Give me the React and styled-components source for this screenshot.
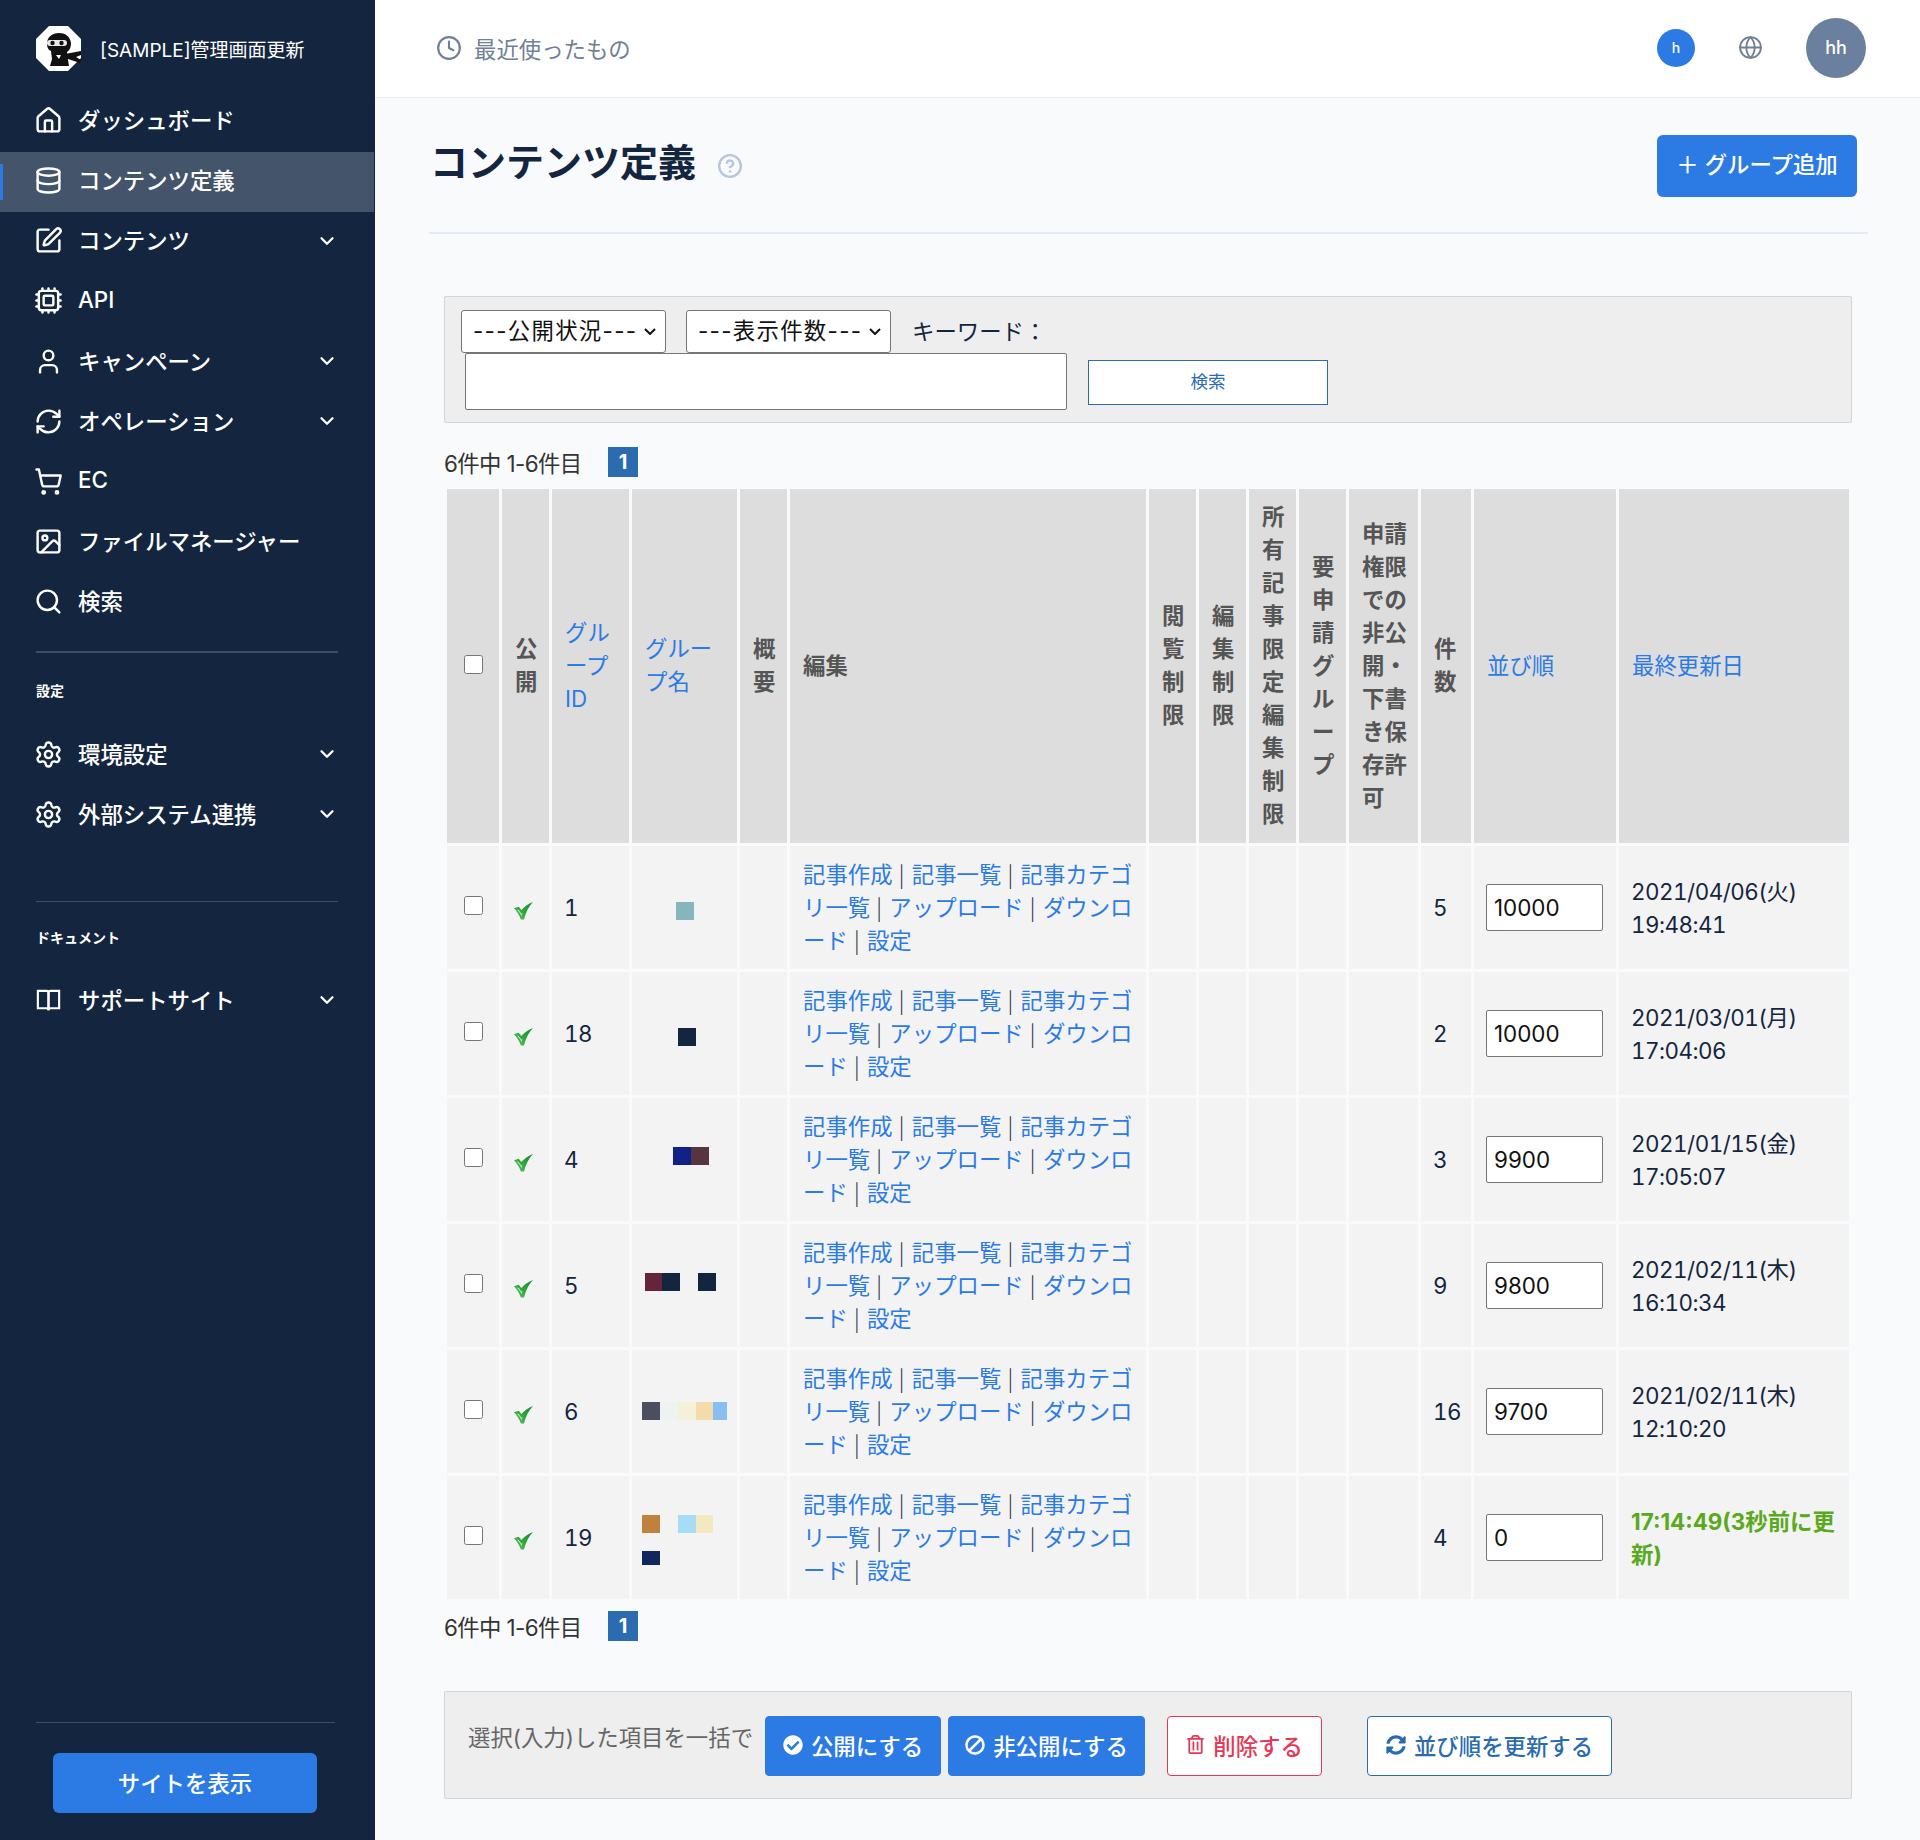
import styled, { createGlobalStyle } from 'styled-components';
import {
  House,
  Database,
  SquarePen,
  Cpu,
  User,
  RefreshCw,
  ShoppingCart,
  Image,
  Search,
  Settings,
  ChevronDown,
  Clock,
  Globe,
  CircleHelp,
} from 'lucide-react';
import { FaCheckCircle, FaBan, FaRegTrashAlt, FaSyncAlt } from 'react-icons/fa';

const GlobalStyle = createGlobalStyle`
  * {
    box-sizing: border-box;
  }
  html,
  body {
    margin: 0;
    padding: 0;
    background: #f9fafc;
  }
  body {
    font-family: Inter, 'Noto Sans CJK JP', sans-serif;
    font-size: 22.4px;
    color: #14263f;
  }
`;

const Shell = styled.div`
  display: flex;
  width: 1920px;
  height: 1840px;
  overflow: hidden;
`;

const Sidebar = styled.aside`
  flex: 0 0 375px;
  display: flex;
  flex-direction: column;
  background: #14263f;
  color: #fff;
`;

const Brand = styled.div`
  display: flex;
  align-items: center;
  gap: 19px;
  height: 92px;
  padding: 5px 0 0 36px;
  font-size: 19px;
`;

const NavGroup = styled.nav`
  display: flex;
  flex-direction: column;
`;

const NavItem = styled.a`
  position: relative;
  display: flex;
  align-items: center;
  gap: 15px;
  height: 60.2px;
  margin-right: 1px;
  padding: 0 36px 6.5px 34px;
  background: ${({ $active }) => ($active ? '#44546a' : 'transparent')};
  font-size: 22.4px;
  font-weight: 500;

  &::before {
    content: '';
    display: ${({ $active }) => ($active ? 'block' : 'none')};
    position: absolute;
    left: 0;
    top: 12px;
    width: 3px;
    height: 36px;
    background: #2c7be5;
  }

  & > svg {
    flex: none;
    margin-top: 3px;
  }
`;

const NavLabel = styled.span`
  flex: 1;
`;

const SideRule = styled.hr`
  flex: none;
  width: ${({ $w }) => $w || 302}px;
  height: ${({ $thin }) => ($thin ? 1 : 2)}px;
  margin: ${({ $top }) => $top}px 0 0 36px;
  border: 0;
  background: #3d4e66;
`;

const SideHeading = styled.div`
  margin: ${({ $top }) => $top}px 0 ${({ $bottom }) => $bottom}px 36px;
  font-size: 14px;
  line-height: 20px;
  font-weight: 700;
`;

const SideFooter = styled.div`
  margin-top: auto;
  padding-bottom: 27px;
`;

const SiteButton = styled.a`
  display: flex;
  align-items: center;
  justify-content: center;
  width: 264px;
  height: 60px;
  margin: 30px 0 0 53px;
  padding-bottom: 2px;
  border-radius: 6px;
  background: #2c7be5;
  font-size: 22.4px;
  font-weight: 500;
`;

const Main = styled.main`
  flex: 1;
  display: flex;
  flex-direction: column;
  min-width: 0;
`;

const TopBar = styled.header`
  display: flex;
  align-items: center;
  height: 98px;
  padding: 0 54px 2px 61px;
  background: #fff;
  border-bottom: 1px solid #e9ecf0;
`;

const Recent = styled.div`
  flex: 1;
  display: flex;
  align-items: center;
  gap: 12px;
  color: #718096;
  font-size: 22.4px;
`;

const Bubble = styled.div`
  display: flex;
  align-items: center;
  justify-content: center;
  width: ${({ $size }) => $size}px;
  height: ${({ $size }) => $size}px;
  border-radius: 50%;
  background: ${({ $bg }) => $bg};
  color: #fff;
  font-size: ${({ $font }) => $font}px;
  font-weight: 500;
`;

const TopIcons = styled.div`
  display: flex;
  align-items: center;
`;

const GlobeLink = styled.span`
  display: flex;
  margin: 0 43px 0 43px;
  color: #718096;
`;

const Content = styled.div`
  padding: 0 52px 0 54px;
`;

const PageHead = styled.div`
  display: flex;
  align-items: center;
  justify-content: space-between;
  height: 136px;
  padding: 1px 11px 0 1px;
  border-bottom: 2px solid #e3ebf6;
`;

const TitleWrap = styled.div`
  display: flex;
  align-items: center;
  gap: 21px;
`;

const Title = styled.h1`
  margin: 0 0 5px;
  font-size: 38px;
  line-height: 1.2;
  font-weight: 700;
  color: #14263f;
`;

const HelpMark = styled.span`
  display: flex;
  color: #b7c6dc;
  margin-top: 1px;
`;

const AddButton = styled.a`
  display: flex;
  align-items: center;
  justify-content: center;
  gap: 7px;
  width: 200px;
  height: 62px;
  padding-bottom: 6px;
  border-radius: 6px;
  background: #2c7be5;
  color: #fff;
  font-size: 22.4px;
  font-weight: 500;
`;

const Body = styled.div`
  padding: 0 16px 0 15px;
`;

const Panel = styled.div`
  background: #eee;
  border: 1px solid #d5d5d5;
  border-radius: 2px;
`;

const FilterPanel = styled(Panel)`
  height: 127px;
  margin-top: 62px;
  padding: 13px 16px 0;
`;

const FilterRow = styled.div`
  display: flex;
  align-items: center;
  gap: 21px;
  height: 43px;
`;

const Select = styled.select`
  appearance: none;
  width: 205px;
  height: 43px;
  margin-right: ${({ $tight }) => ($tight ? -1 : 0)}px;
  padding: 0 4px 2px 11px;
  background: #fff
    url("data:image/svg+xml,%3Csvg xmlns='http://www.w3.org/2000/svg' width='12' height='7' fill='none' stroke='%23111' stroke-width='2'%3E%3Cpath d='M1 1l5 5 5-5'/%3E%3C/svg%3E")
    no-repeat right 9px center;
  border: 1px solid #767676;
  border-radius: 3px;
  color: #111;
  font: inherit;
  font-size: 22.4px;
  letter-spacing: 1.3px;
`;

const KeywordLabel = styled.label`
  margin-bottom: 4px;
`;

const SearchRow = styled.div`
  display: flex;
  align-items: center;
  gap: 21px;
  padding-left: 4px;
`;

const SearchInput = styled.input`
  width: 602px;
  height: 57px;
  background: #fff;
  border: 1px solid #767676;
  border-radius: 2px;
`;

const SearchButton = styled.button`
  width: 240px;
  height: 45px;
  margin-top: 1px;
  padding: 0 0 3px;
  background: #fff;
  border: 1px solid #2b6cb0;
  border-radius: 0;
  color: #2b6cb0;
  font: inherit;
  font-size: 17.5px;
`;

const Pager = styled.div`
  display: flex;
  align-items: center;
  gap: 26px;
  height: 30px;
  margin-top: ${({ $top }) => $top}px;
  color: #333;
  letter-spacing: -0.6px;
`;

const PageNo = styled.span`
  display: flex;
  align-items: center;
  justify-content: center;
  width: 30px;
  height: 30px;
  background: #2b6cb0;
  color: #fff;
  font-size: 20px;
  font-weight: 700;
`;

const Table = styled.table`
  width: 1408px;
  margin-top: 9px;
  table-layout: fixed;
  border-collapse: separate;
  border-spacing: 3px;
  line-height: 33px;
`;

const HeadCell = styled.th`
  width: ${({ $w }) => $w}px;
  height: 354px;
  padding: 0 11px 2px 13px;
  background: #ddd;
  color: #555;
  font-size: 22.4px;
  font-weight: 700;
  text-align: left;
  vertical-align: middle;

  a {
    color: #2c7be5;
    font-weight: 400;
  }
`;

const RowCheck = styled.input`
  display: block;
  width: 19px;
  height: 19px;
  margin: ${({ $head }) => ($head ? '0 0 1px 4px' : '0 0 4px 5px')};
`;

const Cell = styled.td`
  height: 123px;
  padding: 12px 11px 12px 12px;
  background: #f3f3f3;
  color: #14263f;
  font-size: 22.4px;
  font-variant-numeric: tabular-nums;
  letter-spacing: -0.5px;
  vertical-align: middle;
`;

const TickCell = styled(Cell)`
  padding-left: 11px;

  svg {
    display: block;
    margin-top: 6px;
  }
`;

const EditCell = styled(Cell)`
  padding-left: 13px;
  letter-spacing: 0;
`;

const EditLink = styled.a`
  color: #2c7be5;
`;

const Sep = styled.span`
  font-family: 'Noto Sans CJK JP', sans-serif;
  font-weight: 300;
  line-height: 0;
  letter-spacing: 1.2px;
`;

const SwatchCell = styled.td`
  height: 123px;
  padding: ${({ $top }) => $top}px 10px 0 ${({ $left }) => $left}px;
  background: #f3f3f3;
  vertical-align: top;
`;

const SwatchWrap = styled.div`
  display: flex;
  flex-wrap: wrap;
  width: 100%;
`;

const Swatch = styled.span`
  flex: none;
  width: ${({ $w }) => $w || 18}px;
  height: ${({ $h }) => $h || 18}px;
  background: ${({ $c }) => $c};
`;

const LineBreak = styled.span`
  flex: 0 0 100%;
  height: 18px;
`;

const SortInput = styled.input`
  display: block;
  width: 117px;
  height: 47px;
  padding: 0 7px;
  background: #fff;
  border: 1px solid #767676;
  border-radius: 2px;
  color: #111;
  font: inherit;
  font-size: 22.4px;
  font-variant-numeric: normal;
  letter-spacing: 0;
`;

const SortCell = styled(Cell)`
  padding: 0 0 0 12px;
`;

const Fresh = styled.strong`
  color: #5aa91e;
  font-variant-numeric: normal;
  letter-spacing: 0;
`;

const BulkPanel = styled(Panel)`
  display: flex;
  align-items: flex-start;
  height: 108px;
  margin-top: 50px;
  padding: 24px 0 0 23px;
`;

const BulkLabel = styled.span`
  margin: 5px 12px 0 0;
  color: #666;
  line-height: 33px;
  white-space: nowrap;
`;

const ActionButton = styled.a`
  display: flex;
  align-items: center;
  justify-content: center;
  gap: 8px;
  width: ${({ $w }) => $w}px;
  height: 60px;
  margin-left: ${({ $gap }) => $gap}px;
  padding-bottom: 3px;
  border: 1px solid ${({ $line }) => $line};
  border-radius: 4px;
  background: ${({ $bg }) => $bg};
  color: ${({ $fg }) => $fg};
  font-size: 22.4px;
  font-weight: 500;
  white-space: nowrap;
`;

const SlashIcon = styled(FaBan)`
  transform: scaleX(-1);
`;

const BookIcon = () => (
  <svg width="29" height="29" viewBox="0 0 30 30" fill="none" stroke="#fff" strokeWidth="2.200">
    <path d="M4 5h9c1.200 0 2 .8 2 2v18c0-1.200-.8-2-2-2H4V5z" />
    <path d="M26 5h-9c-1.200 0-2 .8-2 2v18c0-1.200.8-2 2-2h9V5z" />
  </svg>
);

const NinjaLogo = () => (
  <svg width="45" height="45" viewBox="0 0 45 45">
    <polygon points="13,0 32,0 45,13 45,32 32,45 13,45 0,32 0,13" fill="#fff" />
    <path
      d="M11 18c0-7 5-11 12-11 6 0 11 3 12 10 0 4-1 7-4 9l1 8 1 6H14l2-7-1-8c-3-1-4-4-4-7z"
      fill="#111"
    />
    <path d="M29 28l16-3v4l-5 2 5 3-1 3-15-5z" fill="#111" />
    <path d="M14 14h14c2 0 3 1 3 3s-1 3-3 3H14c-2 0-3-1-3-3s1-3 3-3z" fill="#e8e8e8" />
    <circle cx="16.500" cy="17" r="2.200" fill="#111" />
    <circle cx="25.500" cy="17" r="2.200" fill="#111" />
    <path d="M20 29h5l-2 4z" fill="#fff" />
    <path d="M15 40h3v5h-3zM21 40h3v5h-3zM27 40h3v5h-3z" fill="#fff" />
  </svg>
);

const GreenCheck = () => (
  <svg width="21" height="18" viewBox="0 0 18 17">
    <defs>
      <linearGradient id="tick" x1="0" y1="1" x2="1" y2="0">
        <stop offset="0" stopColor="#6cc06c" />
        <stop offset="0.5" stopColor="#2ba63a" />
        <stop offset="1" stopColor="#0f8a27" />
      </linearGradient>
    </defs>
    <path d="M0 6l4.500-1.500 2.500 3C9 5 13 2 18 0c-4 4-7 10-8.500 16.500H6.500C5 12.500 3 9 0 6z" fill="url(#tick)" />
    <path d="M2.500 7l2 .5 2.500 3.500 1-1-.8 3.500C6.500 11 4.500 9 2.500 7z" fill="#c8ecc8" />
  </svg>
);

const mainNav = [
  { icon: House, label: 'ダッシュボード' },
  { icon: Database, label: 'コンテンツ定義', active: true },
  { icon: SquarePen, label: 'コンテンツ', more: true },
  { icon: Cpu, label: 'API' },
  { icon: User, label: 'キャンペーン', more: true },
  { icon: RefreshCw, label: 'オペレーション', more: true },
  { icon: ShoppingCart, label: 'EC' },
  { icon: Image, label: 'ファイルマネージャー' },
  { icon: Search, label: '検索' },
];

const columns = [
  { w: 52 },
  { w: 47, label: '公開' },
  { w: 77, label: 'グループID', link: true },
  { w: 105, label: 'グループ名', link: true },
  { w: 47, label: '概要' },
  { w: 356, label: '編集' },
  { w: 47, label: '閲覧制限' },
  { w: 47, label: '編集制限' },
  { w: 47, label: '所有記事限定編集制限' },
  { w: 47, label: '要申請グループ' },
  { w: 69, label: '申請権限での非公開・下書き保存許可' },
  { w: 50, label: '件数' },
  { w: 142, label: '並び順', link: true },
  { w: 230, label: '最終更新日', link: true },
];

const rows = [
  {
    id: 1,
    count: 5,
    order: 10000,
    date: ['2021/04/06(火)', '19:48:41'],
    top: 56,
    left: 44,
    swatches: [{ c: '#86b5bb' }],
  },
  {
    id: 18,
    count: 2,
    order: 10000,
    date: ['2021/03/01(月)', '17:04:06'],
    top: 56,
    left: 46,
    swatches: [{ c: '#14263f' }],
  },
  {
    id: 4,
    count: 3,
    order: 9900,
    date: ['2021/01/15(金)', '17:05:07'],
    top: 49,
    left: 41,
    swatches: [{ c: '#10218a' }, { c: '#573540' }],
  },
  {
    id: 5,
    count: 9,
    order: 9800,
    date: ['2021/02/11(木)', '16:10:34'],
    top: 49,
    left: 13,
    swatches: [{ c: '#66233c', w: 17 }, { c: '#14263f' }, { c: 'transparent' }, { c: '#14263f' }],
  },
  {
    id: 6,
    count: 16,
    order: 9700,
    date: ['2021/02/11(木)', '12:10:20'],
    top: 52,
    left: 10,
    swatches: [
      { c: '#4b4e5f' },
      { c: '#edf3f0' },
      { c: '#f3f1d9' },
      { c: '#f3dbac', w: 17 },
      { c: '#88bef0', w: 14 },
    ],
  },
  {
    id: 19,
    count: 4,
    order: 0,
    fresh: '17:14:49(3秒前に更新)',
    top: 39,
    left: 10,
    swatches: [
      { c: '#be823c' },
      { c: 'transparent' },
      { c: '#a6dcf5' },
      { c: '#f2e9c0', w: 17 },
      { br: true },
      { c: '#11265c', h: 14 },
    ],
  },
];

const editLinks = ['記事作成', '記事一覧', '記事カテゴリ一覧', 'アップロード', 'ダウンロード', '設定'];

function Nav({ icon: Icon, label, active, more }) {
  return (
    <NavItem $active={active}>
      <Icon size={29} strokeWidth={2} />
      <NavLabel>{label}</NavLabel>
      {more && <ChevronDown size={22} strokeWidth={2.500} />}
    </NavItem>
  );
}

function Paging({ top }) {
  return (
    <Pager $top={top}>
      <span>6件中 1-6件目</span>
      <PageNo>1</PageNo>
    </Pager>
  );
}

export default function App() {
  return (
    <Shell>
      <GlobalStyle />
      <Sidebar>
        <Brand>
          <NinjaLogo />
          <span>[SAMPLE]管理画面更新</span>
        </Brand>
        <NavGroup>
          {mainNav.map((item) => (
            <Nav key={item.label} {...item} />
          ))}
        </NavGroup>
        <SideRule $top={17} />
        <SideHeading $top={28} $bottom={25}>
          設定
        </SideHeading>
        <NavGroup>
          <Nav icon={Settings} label="環境設定" more />
          <Nav icon={Settings} label="外部システム連携" more />
        </NavGroup>
        <SideRule $thin $top={55} />
        <SideHeading $top={26} $bottom={24}>
          ドキュメント
        </SideHeading>
        <NavGroup>
          <Nav icon={BookIcon} label="サポートサイト" more />
        </NavGroup>
        <SideFooter>
          <SideRule $thin $top={0} $w={299} />
          <SiteButton>サイトを表示</SiteButton>
        </SideFooter>
      </Sidebar>
      <Main>
        <TopBar>
          <Recent>
            <Clock size={26} strokeWidth={2} />
            <span>最近使ったもの</span>
          </Recent>
          <TopIcons>
            <Bubble $size={38} $bg="#2c7be5" $font={14}>
              h
            </Bubble>
            <GlobeLink>
              <Globe size={25} strokeWidth={1.800} />
            </GlobeLink>
            <Bubble $size={60} $bg="#6b7f9e" $font={18}>
              hh
            </Bubble>
          </TopIcons>
        </TopBar>
        <Content>
          <PageHead>
            <TitleWrap>
              <Title>コンテンツ定義</Title>
              <HelpMark>
                <CircleHelp size={26} strokeWidth={2.200} />
              </HelpMark>
            </TitleWrap>
            <AddButton>＋ グループ追加</AddButton>
          </PageHead>
          <Body>
            <FilterPanel>
              <FilterRow>
                <Select defaultValue="" $tight>
                  <option value="">---公開状況---</option>
                </Select>
                <Select defaultValue="">
                  <option value="">---表示件数---</option>
                </Select>
                <KeywordLabel>キーワード：</KeywordLabel>
              </FilterRow>
              <SearchRow>
                <SearchInput type="text" />
                <SearchButton type="button">検索</SearchButton>
              </SearchRow>
            </FilterPanel>
            <Paging top={24} />
            <Table>
              <thead>
                <tr>
                  {columns.map((col, i) => (
                    <HeadCell key={i} $w={col.w}>
                      {i === 0 ? (
                        <RowCheck type="checkbox" $head />
                      ) : col.link ? (
                        <a>{col.label}</a>
                      ) : (
                        col.label
                      )}
                    </HeadCell>
                  ))}
                </tr>
              </thead>
              <tbody>
                {rows.map((row) => (
                  <tr key={row.id}>
                    <Cell>
                      <RowCheck type="checkbox" />
                    </Cell>
                    <TickCell>
                      <GreenCheck />
                    </TickCell>
                    <Cell>{row.id}</Cell>
                    <SwatchCell $top={row.top} $left={row.left}>
                      <SwatchWrap>
                        {row.swatches.map((s, i) =>
                          s.br ? <LineBreak key={i} /> : <Swatch key={i} $c={s.c} $w={s.w} $h={s.h} />,
                        )}
                      </SwatchWrap>
                    </SwatchCell>
                    <Cell />
                    <EditCell>
                      {editLinks.map((text, i) => (
                        <span key={text}>
                          <EditLink>{text}</EditLink>
                          {i < editLinks.length - 1 && <Sep> | </Sep>}
                        </span>
                      ))}
                    </EditCell>
                    <Cell />
                    <Cell />
                    <Cell />
                    <Cell />
                    <Cell />
                    <Cell>{row.count}</Cell>
                    <SortCell>
                      <SortInput type="text" defaultValue={row.order} />
                    </SortCell>
                    <Cell>
                      {row.fresh ? (
                        <Fresh>{row.fresh}</Fresh>
                      ) : (
                        <>
                          {row.date[0]}
                          <br />
                          {row.date[1]}
                        </>
                      )}
                    </Cell>
                  </tr>
                ))}
              </tbody>
            </Table>
            <Paging top={9} />
            <BulkPanel>
              <BulkLabel>選択(入力)した項目を一括で</BulkLabel>
              <ActionButton $w={176} $gap={0} $line="#2c7be5" $bg="#2c7be5" $fg="#fff">
                <FaCheckCircle size={20} />
                公開にする
              </ActionButton>
              <ActionButton $w={197} $gap={7} $line="#2c7be5" $bg="#2c7be5" $fg="#fff">
                <SlashIcon size={20} />
                非公開にする
              </ActionButton>
              <ActionButton $w={155} $gap={22} $line="#e63757" $bg="#fff" $fg="#e63757">
                <FaRegTrashAlt size={19} />
                削除する
              </ActionButton>
              <ActionButton $w={245} $gap={45} $line="#2b6cb0" $bg="#fff" $fg="#2b6cb0">
                <FaSyncAlt size={20} />
                並び順を更新する
              </ActionButton>
            </BulkPanel>
          </Body>
        </Content>
      </Main>
    </Shell>
  );
}
